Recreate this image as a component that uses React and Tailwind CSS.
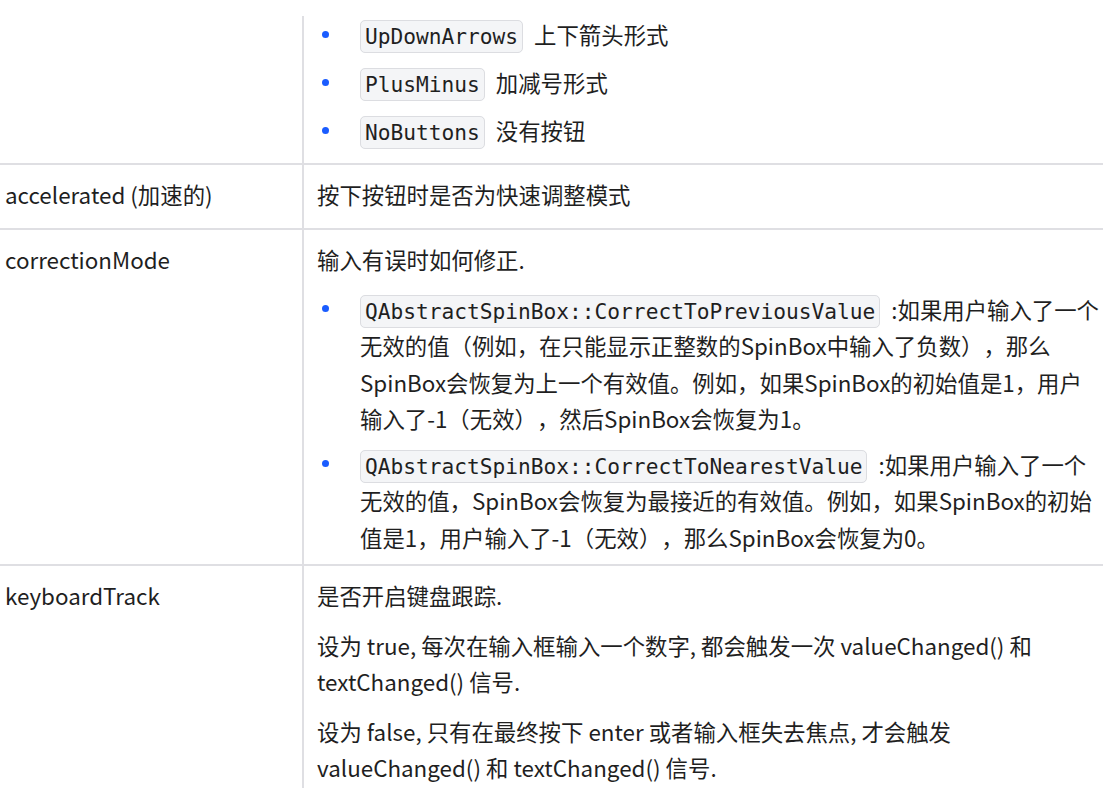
import React from "react";

const Code = ({ children }) => (
    <code className="mr-[6px] rounded-[5px] border border-[#dcdde1] bg-[#f4f5f7] px-[4px] py-[3px] font-['DejaVu_Sans_Mono',monospace] text-[21.2px] leading-none text-[#1f1f1f]">
        {children}
    </code>
);

const Item = ({ children }) => (
    <li className="flex">
        <span className="flex h-[36.5px] w-[43px] shrink-0 items-center pl-[5px]">
            <span className="h-[7px] w-[7px] rounded-full bg-[#1a5cff]" />
        </span>
        <div className="flex-1">{children}</div>
    </li>
);

const Row = ({ name, pb = "pb-[13px]", children }) => (
    <div className="flex border-t-2 border-[#dfdfe3]">
        <div className="w-[304px] shrink-0 border-r-2 border-[#dfdfe3] pl-[5px] pt-[11px]">
            {name}
        </div>
        <div className={`flex flex-1 flex-col gap-[13px] pl-[13px] pr-[3px] pt-[11px] ${pb}`}>{children}</div>
    </div>
);

export default function App() {
    return (
        <div className="h-[788px] w-[1103px] overflow-hidden bg-white pt-[16px] font-['Noto_Sans_CJK_SC',sans-serif] text-[22.4px] leading-[36.5px] text-[#1f1f1f] [text-spacing-trim:space-all]">
            <div className="flex">
                <div className="w-[304px] shrink-0 border-r-2 border-[#dfdfe3]" />
                <ul className="flex flex-1 flex-col gap-[11.5px] pl-[13px] pb-[14px]">
                    <Item><Code>UpDownArrows</Code> 上下箭头形式</Item>
                    <Item><Code>PlusMinus</Code> 加减号形式</Item>
                    <Item><Code>NoButtons</Code> 没有按钮</Item>
                </ul>
            </div>

            <Row name="accelerated (加速的)" pb="pb-[16px]">
                <p>按下按钮时是否为快速调整模式</p>
            </Row>

            <Row name="correctionMode" pb="pb-[9px]">
                <p>输入有误时如何修正.</p>
                <ul className="flex flex-col gap-[9px]">
                    <Item>
                        <Code>QAbstractSpinBox::CorrectToPreviousValue</Code> :如果用户输入了一个无效的值（例如，在只能显示正整数的SpinBox中输入了负数），那么SpinBox会恢复为上一个有效值。例如，如果SpinBox的初始值是1，用户输入了-1（无效），然后SpinBox会恢复为1。
                    </Item>
                    <Item>
                        <Code>QAbstractSpinBox::CorrectToNearestValue</Code> :如果用户输入了一个无效的值，SpinBox会恢复为最接近的有效值。例如，如果SpinBox的初始值是1，用户输入了-1（无效），那么SpinBox会恢复为0。
                    </Item>
                </ul>
            </Row>

            <Row name="keyboardTrack">
                <p>是否开启键盘跟踪.</p>
                <p>设为 true, 每次在输入框输入一个数字, 都会触发一次 valueChanged() 和 textChanged() 信号.</p>
                <p>设为 false, 只有在最终按下 enter 或者输入框失去焦点, 才会触发 valueChanged() 和 textChanged() 信号.</p>
            </Row>
        </div>
    );
}
